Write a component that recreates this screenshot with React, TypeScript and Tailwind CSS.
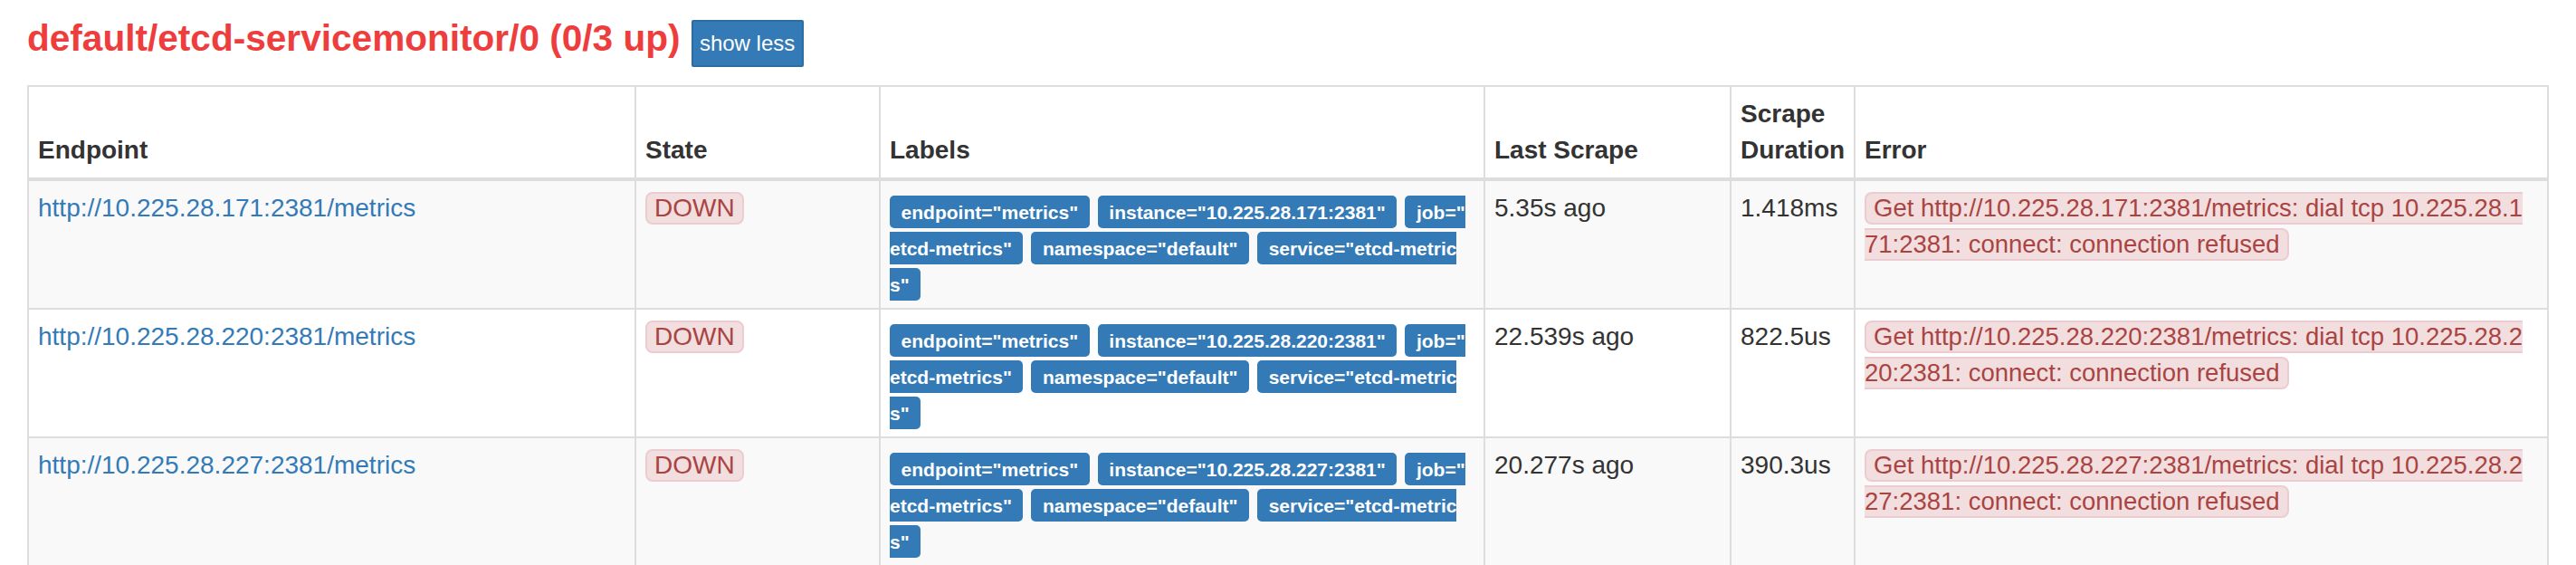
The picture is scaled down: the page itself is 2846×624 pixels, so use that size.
import React from "react";

type Frag = { text: string; kind: "full" | "start" | "end" };

const rows = [
  {
    ip: "10.225.28.171",
    last: "5.35s ago",
    dur: "1.418ms",
    errA: "Get http://10.225.28.171:2381/metrics: dial tcp 10.225.28.1",
    errB: "71:2381: connect: connection refused",
    bg: "bg-[#f9f9f9]",
  },
  {
    ip: "10.225.28.220",
    last: "22.539s ago",
    dur: "822.5us",
    errA: "Get http://10.225.28.220:2381/metrics: dial tcp 10.225.28.2",
    errB: "20:2381: connect: connection refused",
    bg: "bg-white",
  },
  {
    ip: "10.225.28.227",
    last: "20.277s ago",
    dur: "390.3us",
    errA: "Get http://10.225.28.227:2381/metrics: dial tcp 10.225.28.2",
    errB: "27:2381: connect: connection refused",
    bg: "bg-[#f9f9f9]",
  },
];

const GRID = "grid grid-cols-[671px_270px_668px_272px_137px_1fr]";

function Badge({ f }: { f: Frag }) {
  const shape =
    f.kind === "full"
      ? "rounded-[5px] px-[12.6px]"
      : f.kind === "start"
      ? "rounded-l-[5px] pl-[12.6px]"
      : "rounded-r-[5px] pr-[12.6px]";
  return (
    <span
      className={`flex h-[36px] items-center whitespace-nowrap bg-[#337ab7] text-[21px] font-bold leading-none text-white ${shape}`}
    >
      {f.text}
    </span>
  );
}

function Labels({ ip }: { ip: string }) {
  const lines: Frag[][] = [
    [
      { text: 'endpoint="metrics"', kind: "full" },
      { text: `instance="${ip}:2381"`, kind: "full" },
      { text: 'job="', kind: "start" },
    ],
    [
      { text: 'etcd-metrics"', kind: "end" },
      { text: 'namespace="default"', kind: "full" },
      { text: 'service="etcd-metric', kind: "start" },
    ],
    [{ text: 's"', kind: "end" }],
  ];
  return (
    <div className="flex flex-col">
      {lines.map((line, i) => (
        <div key={i} className="flex h-[40px] gap-[9px] pt-[6px]">
          {line.map((f, j) => (
            <Badge key={j} f={f} />
          ))}
        </div>
      ))}
    </div>
  );
}

function ErrorText({ a, b }: { a: string; b: string }) {
  return (
    <div className="flex flex-col text-[27.5px]">
      <div className="flex h-[40px] pt-[2px]">
        <span className="flex h-[36px] items-center whitespace-nowrap rounded-l-[8px] border-y-2 border-l-2 border-[#ebccd1] bg-[#f2dede] pl-[8px] text-[#a94442]">
          {a}
        </span>
      </div>
      <div className="flex h-[40px] pt-[2px]">
        <span className="flex h-[36px] items-center whitespace-nowrap rounded-r-[8px] border-y-2 border-r-2 border-[#ebccd1] bg-[#f2dede] pr-[8px] text-[#a94442]">
          {b}
        </span>
      </div>
    </div>
  );
}

export default function App() {
  const headers: React.ReactNode[] = [
    "Endpoint",
    "State",
    "Labels",
    "Last Scrape",
    <>
      Scrape
      <br />
      Duration
    </>,
    "Error",
  ];
  return (
    <div className="min-h-[624px] w-[2846px] overflow-hidden bg-white font-['Liberation_Sans',Arial,sans-serif] text-[28px] leading-[40px] text-[#333]">
      <div className="flex items-start px-[30px] pt-[22px]">
        <h2 className="text-[40.6px] font-bold leading-[40px] text-[#ee3d3d]">
          default/etcd-servicemonitor/0 (0/3 up)
        </h2>
        <button className="ml-[12px] flex h-[52px] w-[124px] items-center justify-center rounded-[2px] border-2 border-[#2e6da4] bg-[#337ab7] text-[24px] leading-none text-white">
          show less
        </button>
      </div>

      <div className="mx-[30px] mt-[20px] w-[2786px] border-r-2 border-t-2 border-[#ddd]">
        <div className={`${GRID} bg-white`}>
          {headers.map((h, i) => (
            <div
              key={i}
              className="flex h-[104px] flex-col justify-end border-b-4 border-l-2 border-[#ddd] px-[10px] py-[10px] font-bold"
            >
              <div>{h}</div>
            </div>
          ))}
        </div>

        {rows.map((r, i) => {
          const cell = `border-l-2 border-[#ddd] px-[10px] py-[10px] ${
            i > 0 ? "border-t-2 h-[142px]" : "h-[140px]"
          }`;
          return (
            <div key={i} className={`${GRID} ${r.bg}`}>
              <div className={cell}>
                <a className="text-[#337ab7]" href="#">
                  {`http://${r.ip}:2381/metrics`}
                </a>
              </div>
              <div className={cell}>
                <div className="flex pt-[2px]">
                  <span className="flex h-[36px] items-center rounded-[8px] border-2 border-[#ebccd1] bg-[#f2dede] px-[8px] text-[#a94442]">
                    DOWN
                  </span>
                </div>
              </div>
              <div className={cell}>
                <Labels ip={r.ip} />
              </div>
              <div className={cell}>{r.last}</div>
              <div className={cell}>{r.dur}</div>
              <div className={cell}>
                <ErrorText a={r.errA} b={r.errB} />
              </div>
            </div>
          );
        })}
      </div>
    </div>
  );
}
